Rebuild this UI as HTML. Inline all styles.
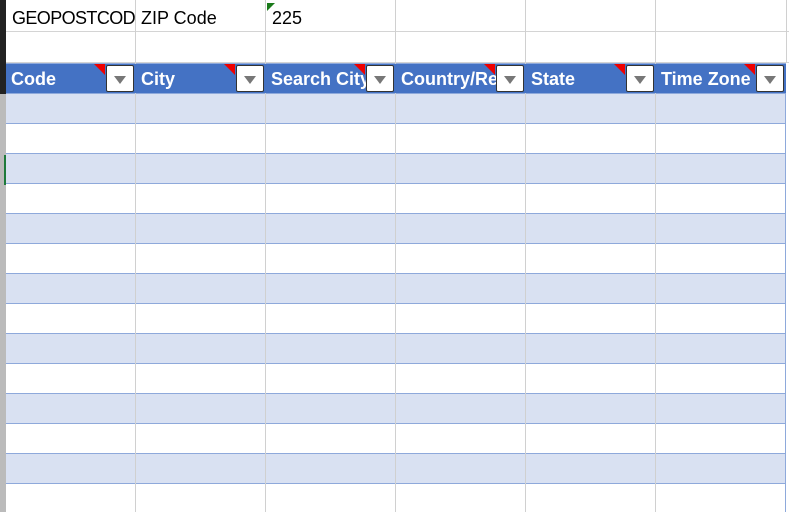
<html><head><style>
body{margin:0;width:789px;height:512px;overflow:hidden;background:#fff;font-family:"Liberation Sans",sans-serif;position:relative}
div{position:absolute;box-sizing:border-box}
.t{font-size:18px;color:#000;top:8px}
.h{top:64px;height:29px;background:#4472C4;}
.ht{color:#fff;font-weight:bold;font-size:18px;top:69px;white-space:nowrap;overflow:hidden}
.b{top:65px;width:28px;height:27px;background:#fff;border:1px solid #333;border-radius:2px;z-index:2}
.b:after{content:"";position:absolute;left:7px;top:10px;border-left:6px solid transparent;border-right:6px solid transparent;border-top:8px solid #777}
.r{width:0;height:0;top:64px;border-left:11px solid transparent;border-top:11px solid #e00;z-index:1}
</style></head><body>
<div style="left:0;top:0;width:6px;height:94px;background:#222"></div>
<div style="left:0;top:94px;width:6px;height:418px;background:#bbb"></div>
<div style="left:4px;top:155px;width:3px;height:30px;background:#1e7a3a"></div>
<div style="left:6px;top:31px;width:783px;height:1px;background:#d4d4d4"></div>
<div style="left:6px;top:62px;width:783px;height:1px;background:#d4d4d4"></div>
<div style="left:6px;top:63px;width:780px;height:1px;background:#8EA9DB"></div>
<div style="left:6px;top:93px;width:780px;height:419px;background:repeating-linear-gradient(to bottom,#8EA9DB 0,#8EA9DB 1px,#D9E1F2 1px,#D9E1F2 30px,#8EA9DB 30px,#8EA9DB 31px,#fff 31px,#fff 60px)"></div>
<div style="left:785px;top:63px;width:1px;height:449px;background:#8EA9DB"></div>
<div style="left:135px;top:0;width:1px;height:512px;background:#d0d0d0"></div>
<div style="left:265px;top:0;width:1px;height:512px;background:#d0d0d0"></div>
<div style="left:395px;top:0;width:1px;height:512px;background:#d0d0d0"></div>
<div style="left:525px;top:0;width:1px;height:512px;background:#d0d0d0"></div>
<div style="left:655px;top:0;width:1px;height:512px;background:#d0d0d0"></div>
<div style="left:786px;top:0;width:1px;height:63px;background:#d0d0d0"></div>
<div class="h" style="left:6px;width:780px"></div>
<div class="ht" style="left:11px;width:110px">Code</div>
<div class="ht" style="left:141px;width:110px">City</div>
<div class="ht" style="left:271px;width:110px">Search City</div>
<div class="ht" style="left:401px;width:110px">Country/Region</div>
<div class="ht" style="left:531px;width:110px">State</div>
<div class="ht" style="left:661px;width:110px">Time Zone</div>
<div class="r" style="left:94px"></div><div class="r" style="left:224px"></div><div class="r" style="left:354px"></div><div class="r" style="left:484px"></div><div class="r" style="left:614px"></div><div class="r" style="left:744px"></div>
<div class="b" style="left:106px"></div><div class="b" style="left:236px"></div><div class="b" style="left:366px"></div><div class="b" style="left:496px"></div><div class="b" style="left:626px"></div><div class="b" style="left:756px"></div>
<div class="t" style="left:12px;letter-spacing:-0.6px">GEOPOSTCOD</div>
<div class="t" style="left:141px">ZIP Code</div>
<div class="t" style="left:272px">225</div>
<div style="left:267px;top:3px;width:0;height:0;border-right:8px solid transparent;border-top:8px solid #1a7a1a"></div>
</body></html>
